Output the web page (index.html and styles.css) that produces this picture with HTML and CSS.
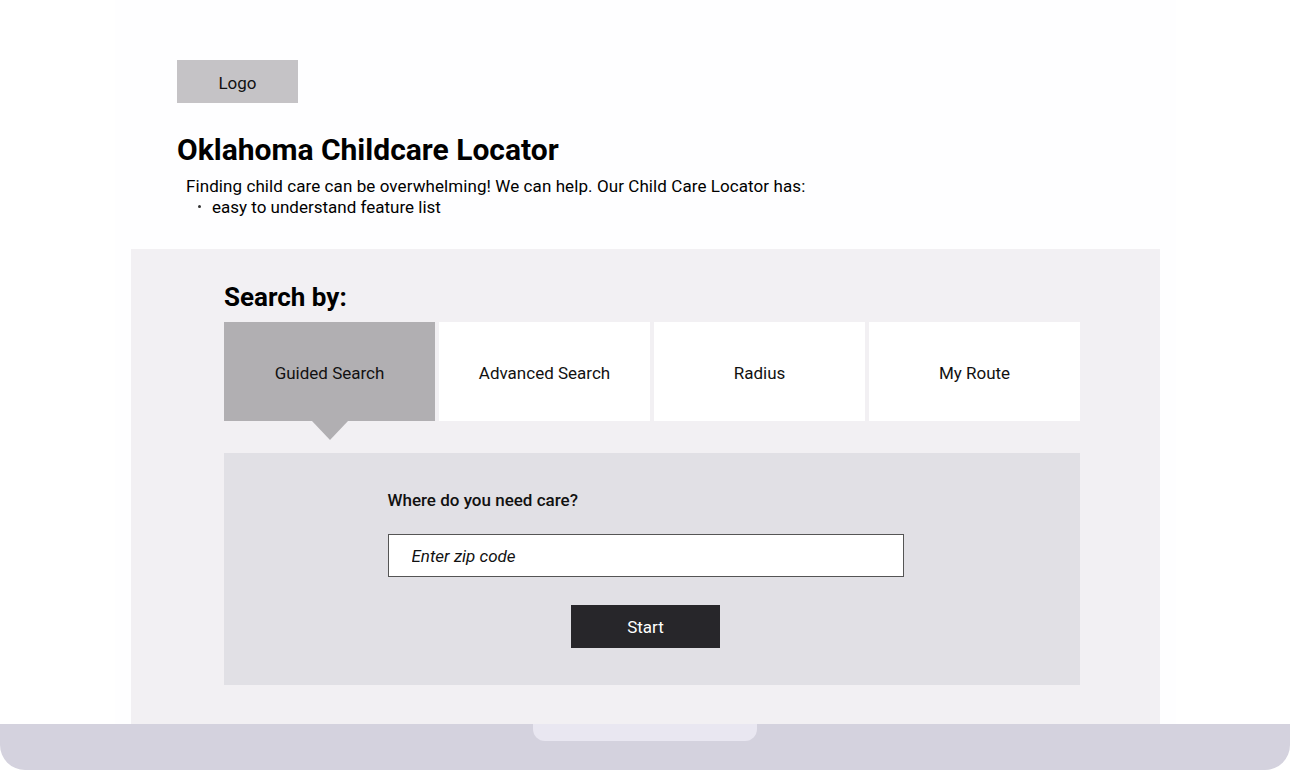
FILE: index.html
```html
<!DOCTYPE html>
<html lang="en">
<head>
<meta charset="utf-8">
<title>Oklahoma Childcare Locator</title>
<link rel="stylesheet" href="styles.css">
</head>
<body>
<div class="device">
  <div class="screen">
    <header class="header">
      <div class="logo">Logo</div>
      <h1 class="title">Oklahoma Childcare Locator</h1>
      <p class="intro">Finding child care can be overwhelming! We can help. Our Child Care Locator has:</p>
      <ul class="features">
        <li>easy to understand feature list</li>
      </ul>
    </header>
    <section class="search">
      <h2 class="search-title">Search by:</h2>
      <div class="tabs">
        <div class="tab tab-active">Guided Search</div>
        <div class="tab">Advanced Search</div>
        <div class="tab">Radius</div>
        <div class="tab">My Route</div>
      </div>
      <div class="panel">
        <div class="form">
          <label class="label" for="zip">Where do you need care?</label>
          <input class="zip" id="zip" type="text" placeholder="Enter zip code">
          <button class="start" type="button">Start</button>
        </div>
      </div>
    </section>
  </div>
  <div class="base">
    <div class="notch"></div>
  </div>
</div>
</body>
</html>
```

FILE: styles.css
```css
* { box-sizing: border-box; }

html, body {
  margin: 0;
  padding: 0;
  background: #ffffff;
  font-family: Roboto, "Liberation Sans", sans-serif;
  color: #000;
}

.device {
  width: 1291px;
  height: 778px;
  display: flex;
  flex-direction: column;
  overflow: hidden;
}

.screen {
  margin: 0 115px 0 115px;
  height: 724px;
  background: #fefeff;
  display: flex;
  flex-direction: column;
}

.header {
  padding: 60px 0 0 62px;
  height: 249px;
}

.logo {
  width: 121px;
  height: 43px;
  background: #c5c3c6;
  display: flex;
  align-items: center;
  justify-content: center;
  font-size: 17px;
  padding-top: 3px;
  color: #111;
}

.title {
  margin: 29px 0 0 0;
  font-size: 30px;
  font-weight: 700;
  line-height: 36px;
}

.intro {
  margin: 9px 0 0 9px;
  font-size: 17px;
  letter-spacing: 0.08px;
  line-height: 19px;
}

.features {
  margin: 1px 0 0 0;
  padding: 0 0 0 35px;
  font-size: 17px;
  line-height: 20px;
  list-style: none;
}

.features li {
  position: relative;
}

.features li::before {
  content: "";
  position: absolute;
  left: -14px;
  top: 8px;
  width: 3px;
  height: 3px;
  border-radius: 50%;
  background: #333;
}

.search {
  margin: 0 16px;
  background: #f2f0f3;
  flex: 1;
  padding: 33px 80px 0 93px;
}

.search-title {
  margin: 0 0 9px 0;
  font-size: 26px;
  font-weight: 700;
  line-height: 31px;
}

.tabs {
  display: grid;
  grid-template-columns: repeat(4, 1fr);
  column-gap: 4px;
  height: 99px;
}

.tab {
  background: #ffffff;
  display: flex;
  align-items: center;
  justify-content: center;
  font-size: 17px;
  padding-top: 3px;
  color: #111;
}

.tab-active {
  background: #b1afb2;
  position: relative;
}

.tab-active::after {
  content: "";
  position: absolute;
  left: 50%;
  top: 100%;
  margin-left: -18px;
  border-left: 18px solid transparent;
  border-right: 18px solid transparent;
  border-top: 19px solid #b1afb2;
}

.panel {
  margin-top: 32px;
  height: 232px;
  background: #e1e0e5;
  display: flex;
  justify-content: center;
  padding-right: 13px;
}

.form {
  width: 516px;
  display: flex;
  flex-direction: column;
  align-items: center;
  padding-top: 37px;
}

.label {
  align-self: flex-start;
  font-size: 17px;
  font-weight: 500;
  line-height: 20px;
  color: #111;
}

.zip {
  margin-top: 24px;
  width: 516px;
  height: 43px;
  border: 1px solid #555;
  background: #fff;
  padding: 0 0 0 23px;
  font-family: Roboto, "Liberation Sans", sans-serif;
  font-size: 17px;
  font-style: italic;
  outline: none;
}

.zip::placeholder {
  color: #111;
  font-style: italic;
}

.start {
  margin-top: 28px;
  width: 149px;
  height: 43px;
  border: none;
  background: #27262a;
  color: #fff;
  font-family: Roboto, "Liberation Sans", sans-serif;
  font-size: 17px;
  padding-top: 1px;
}

.base {
  height: 46px;
  background: #d4d2de;
  border-radius: 0 0 25px 25px;
  width: 1290px;
  display: flex;
  justify-content: center;
  padding-right: 1px;
}

.notch {
  width: 224px;
  height: 17px;
  background: #e9e7f1;
  border-radius: 0 0 12px 12px;
}
```
